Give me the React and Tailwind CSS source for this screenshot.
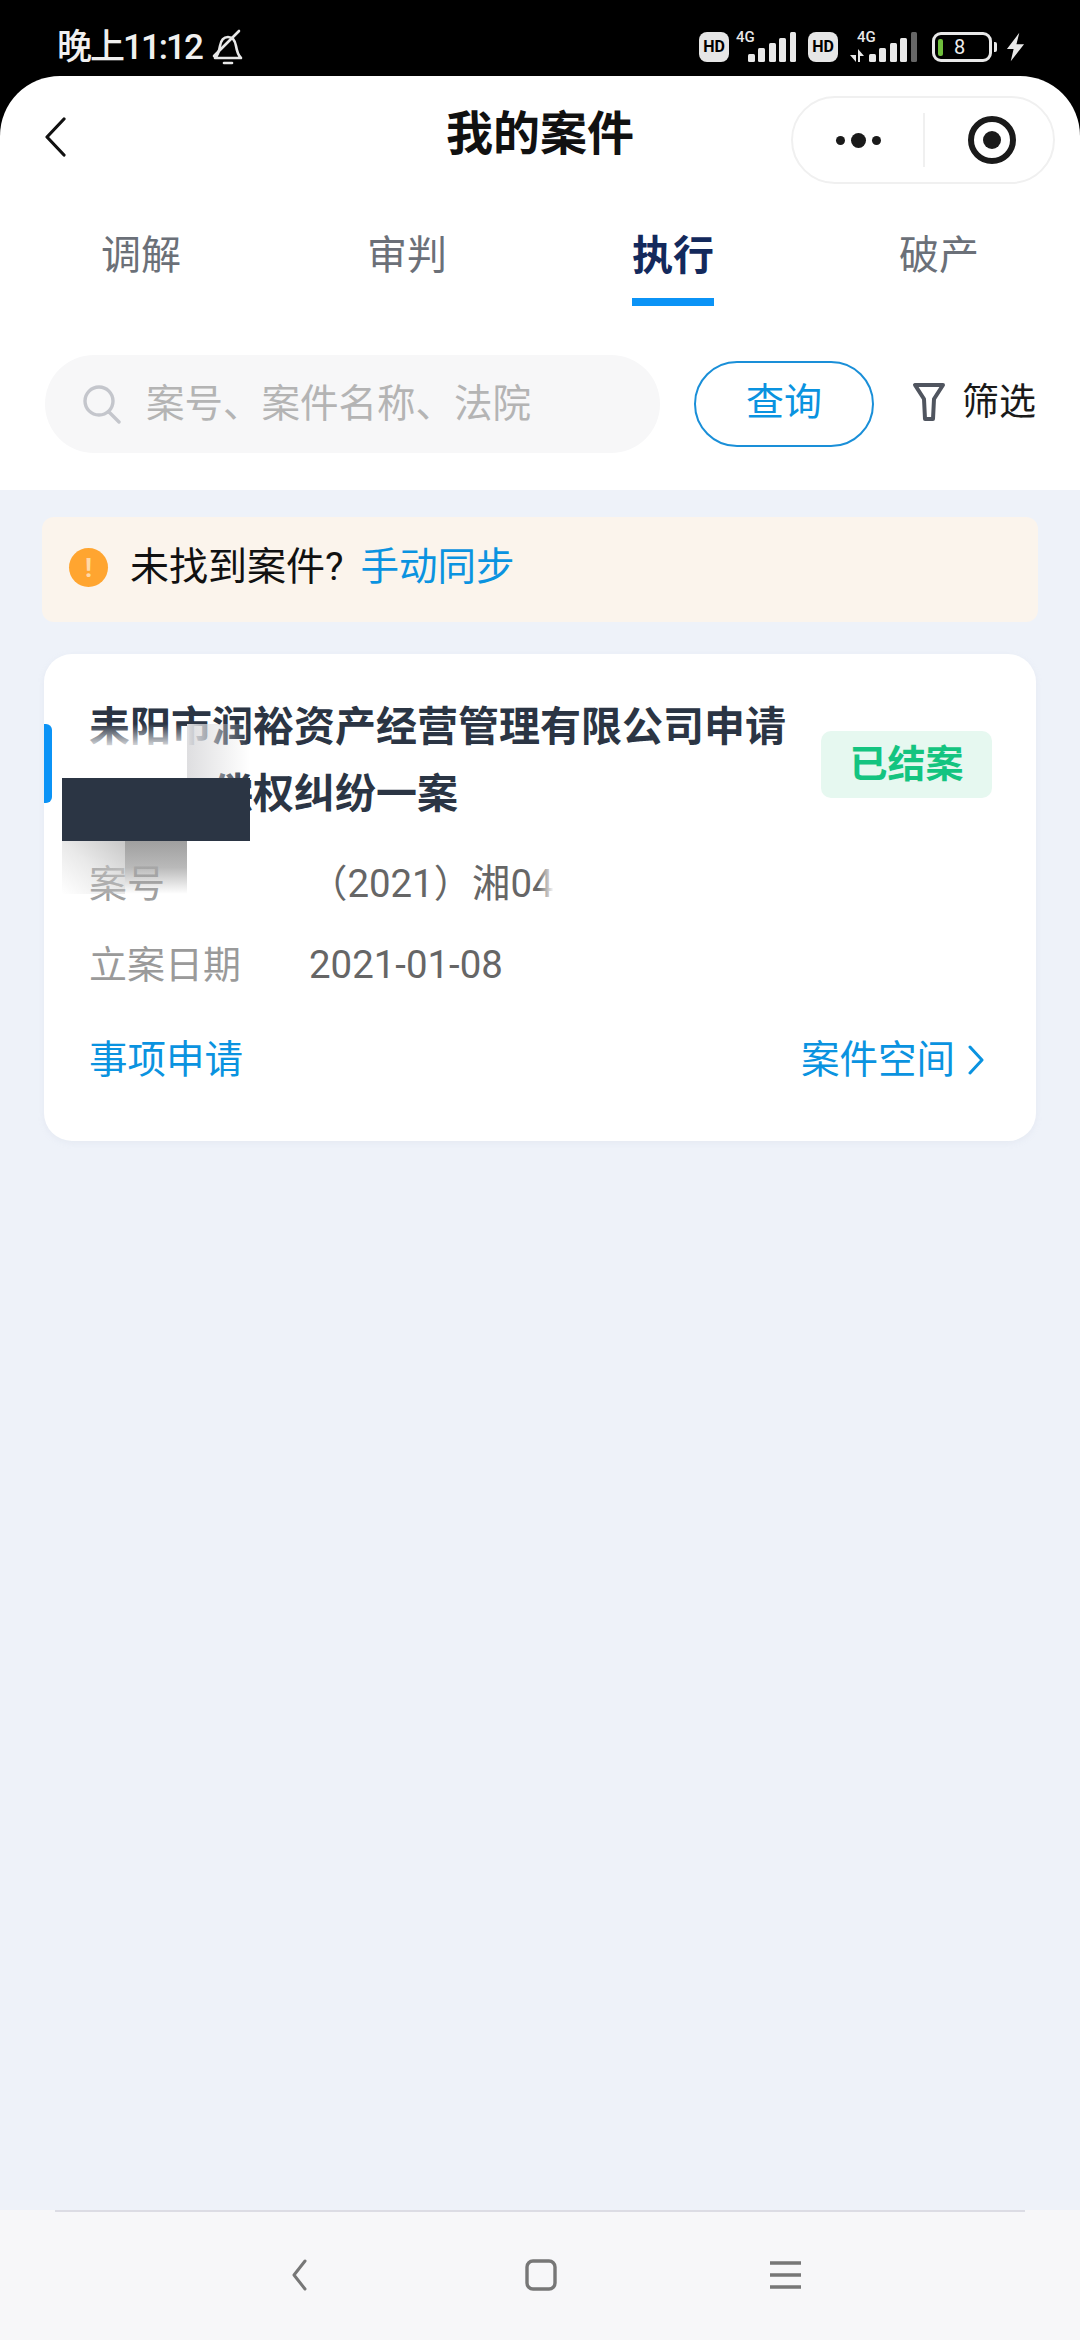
import React from 'react';

const CJK = "font-['Roboto','Noto_Sans_CJK_SC',sans-serif]";

const Bars = ({ lastDim }) => (
  <svg width="48" height="30" viewBox="0 0 48 30" className="block">
    <rect x="0" y="22" width="7" height="8" rx="1.500" fill="#e8e8e8" />
    <rect x="10" y="16" width="7" height="14" rx="1.500" fill="#e8e8e8" />
    <rect x="21" y="11" width="7" height="19" rx="1.500" fill="#e8e8e8" />
    <rect x="31" y="6" width="7" height="24" rx="1.500" fill="#e8e8e8" />
    <rect x="42" y="0" width="6" height="30" rx="1.500" fill={lastDim ? '#666' : '#e8e8e8'} />
  </svg>
);

const HdBadge = () => (
  <span className="flex h-[30px] w-[30px] items-center justify-center rounded-[8px] bg-[#e6e6e6] text-[16px] font-bold leading-none text-black">
    HD
  </span>
);

const StatusBar = () => (
  <div className="flex h-[76px] shrink-0 items-start justify-between pl-[57px] pr-[55px] pt-[29px]">
    <div className="flex items-center gap-[8px] text-[35px] font-medium leading-[38px] text-[#f0f0f0]">
      <span className="tracking-[-2px]">晚上11:12</span>
      <svg width="36" height="38" viewBox="0 0 36 38" fill="none" stroke="#e8e8e8" strokeWidth="2.6" strokeLinecap="round" strokeLinejoin="round">
        <path d="M5 29c3-3 4-6 5-12 1-6 4-9 8-9s7 3 8 9c1 6 2 9 5 12z" />
        <path d="M14 34h8" />
        <path d="M4 27 29 2" />
      </svg>
    </div>
    <div className="flex items-center pt-[3px]">
      <HdBadge />
      <div className="relative ml-[19px] h-[30px] w-[48px]">
        <span className="absolute left-[-12px] top-[-2px] text-[15px] font-medium leading-none text-[#e8e8e8]">4G</span>
        <Bars />
      </div>
      <div className="ml-[12px]"><HdBadge /></div>
      <div className="relative ml-[12px] h-[30px] w-[67px]">
        <span className="absolute left-[7px] top-[-2px] text-[15px] font-medium leading-none text-[#e8e8e8]">4G</span>
        <svg width="14" height="13" viewBox="0 0 14 13" className="absolute bottom-0 left-0">
          <path d="M0 6h6v7zM8 0l6 7h-4v6H8z" fill="#e8e8e8" />
        </svg>
        <div className="absolute right-0 top-0"><Bars lastDim /></div>
      </div>
      <div className="ml-[15px] flex items-center gap-[2px]">
        <div className="flex h-[30px] w-[60px] items-center rounded-[9px] border-[3px] border-[#e8e8e8] pl-[3px]">
          <span className="h-[17px] w-[5px] rounded-[2px] bg-[#6fbf3c]" />
          <span className="ml-[11px] text-[20px] leading-none text-[#eee]">8</span>
        </div>
        <span className="h-[10px] w-[3px] rounded-r-[2px] bg-[#e8e8e8]" />
      </div>
      <svg width="19" height="30" viewBox="0 0 20 30" className="ml-[9px]">
        <path d="M14 0 1 17h7l-3 13 14-18h-8z" fill="#e8e8e8" />
      </svg>
    </div>
  </div>
);

const NavBar = () => (
  <div className="flex h-[143px] shrink-0 items-start px-[25px] pt-[20px]">
    <div className="flex-1">
      <svg width="22" height="40" viewBox="0 0 22 40" fill="none" stroke="#111" strokeWidth="3.2" strokeLinecap="round" strokeLinejoin="round" className="ml-[19px] mt-[21px]">
        <path d="M20 2 3 20l17 18" />
      </svg>
    </div>
    <div className="mt-[13px] text-[47px] font-bold leading-[50px] text-[#111]">我的案件</div>
    <div className="flex flex-1 justify-end">
      <div className="flex h-[88px] w-[264px] items-center rounded-full border-[2px] border-[#f0f0f0]">
        <div className="flex w-[130px] items-center justify-center gap-[6px]">
          <span className="h-[9px] w-[9px] rounded-full bg-[#1a1a1a]" />
          <span className="h-[15px] w-[15px] rounded-full bg-[#1a1a1a]" />
          <span className="h-[9px] w-[9px] rounded-full bg-[#1a1a1a]" />
        </div>
        <span className="h-[54px] w-[2px] bg-[#f0f0f0]" />
        <div className="flex flex-1 items-center justify-center pl-[6px]">
          <span className="flex h-[48px] w-[48px] items-center justify-center rounded-full border-[6px] border-[#1a1a1a]">
            <span className="h-[18px] w-[18px] rounded-full bg-[#1a1a1a]" />
          </span>
        </div>
      </div>
    </div>
  </div>
);

const tabs = [
  { label: '调解' },
  { label: '审判' },
  { label: '执行', active: true },
  { label: '破产' },
];

const Tabs = () => (
  <div className="grid h-[89px] shrink-0 grid-cols-4 px-[8px]">
    {tabs.map((t) => (
      <div key={t.label} className="flex flex-col items-center">
        <span className={t.active ? 'mt-[9px] text-[41px] font-bold leading-[56px] text-[#13295c]' : 'mt-[9px] text-[40px] leading-[56px] text-[#6b7078]'}>
          {t.label}
        </span>
        {t.active && <span className="mt-[14px] h-[8px] w-[82px] bg-[#0b93f6]" />}
      </div>
    ))}
  </div>
);

const SearchRow = () => (
  <div className="flex h-[182px] shrink-0 items-start bg-white pl-[45px] pt-[47px]">
    <div className="flex h-[98px] w-[615px] items-center rounded-full bg-[#f7f7f8] pl-[37px]">
      <svg width="40" height="40" viewBox="0 0 40 40" fill="none" stroke="#c4c6cc" strokeWidth="3.4" strokeLinecap="round">
        <circle cx="17" cy="17" r="14" />
        <path d="m27 28 10 10" />
      </svg>
      <span className="ml-[24px] text-[38.500px] leading-none text-[#b4b4b4]">案号、案件名称、法院</span>
    </div>
    <div className="ml-[34px] mt-[6px] flex h-[86px] w-[180px] items-center justify-center rounded-full border-[2px] border-[#1a8fd8] pb-[4px] text-[38px] leading-none text-[#0a93e0]">
      查询
    </div>
    <div className="ml-[38px] mt-[27px] flex items-center gap-[16px]">
      <svg width="34" height="40" viewBox="0 0 34 40" fill="none" stroke="#50555f" strokeWidth="4" strokeLinejoin="round">
        <path d="M3 3h28L22 17l-1 20h-8l-1-20z" />
      </svg>
      <span className="text-[37px] leading-none text-[#1a1a1a]">筛选</span>
    </div>
  </div>
);

const Notice = () => (
  <div className="mx-[42px] mt-[27px] flex h-[105px] items-center rounded-[12px] bg-[#fbf4ec] pl-[27px] pb-[4px]">
    <span className="flex h-[39px] w-[39px] items-center justify-center rounded-full bg-[#ffa530] text-[26px] font-bold leading-none text-[#ffd9a8]">!</span>
    <span className="ml-[22px] text-[39px] leading-none text-[#111]">未找到案件?</span>
    <span className="ml-[17px] text-[38.500px] leading-none text-[#0a93e0]">手动同步</span>
  </div>
);

// 打码的马赛克块
const Redaction = () => (
  <div className="pointer-events-none absolute left-[18px] top-[70px] grid h-[170px] w-[188px] grid-cols-3 grid-rows-[54px_63px_53px]">
    <div className="col-span-2 bg-gradient-to-b from-transparent via-white to-white" />
    <div className="bg-gradient-to-r from-[#dedee0] to-transparent" />
    <div className="col-span-3 bg-[#2b3544]" />
    <div className="bg-gradient-to-bl from-[#c8c8c8] via-[#c8c8c8]/40 to-transparent" />
    <div className="bg-gradient-to-b from-[#9f9f9f] via-[#a8a8a8]/80 to-transparent" />
  </div>
);

const CaseCard = () => (
  <div className="relative mx-[44px] mt-[32px] h-[487px] rounded-[28px] bg-white pl-[45px] pr-[44px] pt-[40px] shadow-[0_2px_6px_rgba(180,190,210,0.15)]">
    <span className="absolute left-0 top-[70px] h-[79px] w-[8px] rounded-r-[6px] bg-[#0b93f6]" />
    <div className="flex items-center justify-between">
      <div className="w-[710px] text-[41px] font-bold leading-[67px] text-[#2b3544]">
        <div>耒阳市润裕资产经营管理有限公司申请</div>
        <div className="pl-[123px]">偿权纠纷一案</div>
      </div>
      <span className="mt-[6px] flex h-[67px] w-[171px] items-center justify-center rounded-[10px] bg-[#e6f8f0] text-[38px] font-bold leading-none text-[#14c480]">
        已结案
      </span>
    </div>
    <div className="mt-[29px] flex items-center leading-[54px]">
      <span className="w-[220px] text-[38px] text-[#a0a0a0]">案号</span>
      <span className="relative whitespace-nowrap text-[38.400px] text-[#666]">
        （2021）湘04
        <span className="absolute inset-y-0 right-0 w-[16px] bg-gradient-to-r from-transparent to-white" />
      </span>
    </div>
    <div className="mt-[27px] flex items-center leading-[54px]">
      <span className="w-[220px] text-[38px] text-[#9a9a9a]">立案日期</span>
      <span className="text-[38.400px] text-[#666]">2021-01-08</span>
    </div>
    <div className="mt-[41px] flex items-center justify-between pr-[7px] text-[38.500px] leading-[54px] text-[#0a93e0]">
      <span>事项申请</span>
      <span className="flex items-center gap-[12px]">
        案件空间
        <svg width="18" height="30" viewBox="0 0 18 30" fill="none" stroke="#0a93e0" strokeWidth="3" strokeLinecap="round" strokeLinejoin="round">
          <path d="m3 2 12 13L3 28" />
        </svg>
      </span>
    </div>
    <Redaction />
  </div>
);

const SystemNav = () => (
  <div className="h-[130px] shrink-0 bg-[#f7f7f9] px-[55px]">
    <div className="h-[2px] bg-[#dcdce4]" />
    <div className="flex pl-[236px] pt-[47px]">
      <svg width="16" height="32" viewBox="0 0 16 32" fill="none" stroke="#777" strokeWidth="3" strokeLinecap="round" strokeLinejoin="round">
        <path d="M14 2 3 16l11 14" />
      </svg>
      <svg width="32" height="32" viewBox="0 0 32 32" fill="none" stroke="#777" strokeWidth="3.400" className="ml-[218px]">
        <rect x="2" y="2" width="28" height="28" rx="6" />
      </svg>
      <svg width="31" height="28" viewBox="0 0 31 28" stroke="#777" strokeWidth="3.400" className="ml-[213px] mt-[2px]">
        <path d="M0 2h31M0 14h31M0 26h31" />
      </svg>
    </div>
  </div>
);

export default function App() {
  return (
    <div className={`flex h-[2340px] w-[1080px] flex-col overflow-hidden bg-black ${CJK}`}>
      <StatusBar />
      <div className="flex flex-1 flex-col overflow-hidden rounded-t-[60px] bg-white">
        <NavBar />
        <Tabs />
        <SearchRow />
        <main className="flex-1 bg-[#eef2f9]">
          <Notice />
          <CaseCard />
        </main>
        <SystemNav />
      </div>
    </div>
  );
}
